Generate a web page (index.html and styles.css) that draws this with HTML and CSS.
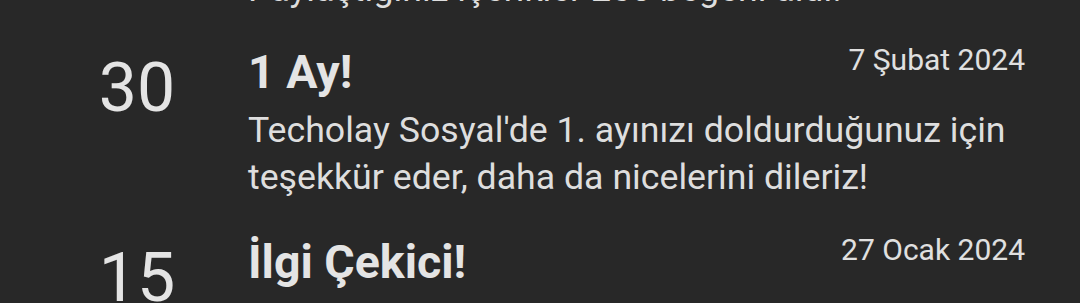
FILE: index.html
```html
<!DOCTYPE html>
<html lang="tr">
<head>
<meta charset="utf-8">
<link rel="stylesheet" href="styles.css">
</head>
<body>
<div class="viewport">
  <ul class="list">
    <li class="row">
      <div class="num">50</div>
      <div class="content">
        <div class="head">
          <h2 class="title">Beğenildi!</h2>
          <span class="date">10 Şubat 2024</span>
        </div>
        <p class="body">Paylaştığınız içerikler 250 beğeni aldı!</p>
      </div>
    </li>
    <li class="row">
      <div class="num">30</div>
      <div class="content">
        <div class="head">
          <h2 class="title">1 Ay!</h2>
          <span class="date">7 Şubat 2024</span>
        </div>
        <p class="body">Techolay Sosyal'de 1. ayınızı doldurduğunuz için teşekkür eder, daha da nicelerini dileriz!</p>
      </div>
    </li>
    <li class="row">
      <div class="num">15</div>
      <div class="content">
        <div class="head">
          <h2 class="title">İlgi Çekici!</h2>
          <span class="date">27 Ocak 2024</span>
        </div>
        <p class="body">Paylaşımlarınız ilk kez 50 beğeniye ulaştı.</p>
      </div>
    </li>
  </ul>
</div>
</body>
</html>
```
FILE: styles.css
```css
html, body {
  margin: 0;
  padding: 0;
  background: #282828;
}
body {
  font-family: Roboto, "Noto Sans", sans-serif;
  color: #e2e2e2;
  width: 1080px;
  height: 303px;
  overflow: hidden;
}
.viewport {
  height: 303px;
  overflow: hidden;
}
.list {
  list-style: none;
  margin: -114px 0 0 0;
  padding: 0;
}
.row {
  display: grid;
  grid-template-columns: 190px 1fr;
  column-gap: 16px;
  padding: 18px 55px 18px 42px;
}
.row:first-child {
  padding-top: 20px;
  padding-bottom: 16px;
}
.num {
  font-size: 68px;
  font-weight: 400;
  line-height: 80px;
  text-align: center;
  margin-top: 1px;
  color: #e4e4e4;
}
.content {
  display: flex;
  flex-direction: column;
  gap: 10px;
}
.head {
  display: flex;
  justify-content: space-between;
  align-items: flex-start;
}
.title {
  margin: 0;
  font-size: 46.5px;
  font-weight: 700;
  line-height: 50px;
  color: #e4e4e4;
}
.date {
  font-size: 30px;
  line-height: 28px;
  margin-top: -1px;
  color: #e0e0e0;
}
.body {
  margin: 0;
  font-size: 35.7px;
  line-height: 47px;
  color: #dedede;
}
```
